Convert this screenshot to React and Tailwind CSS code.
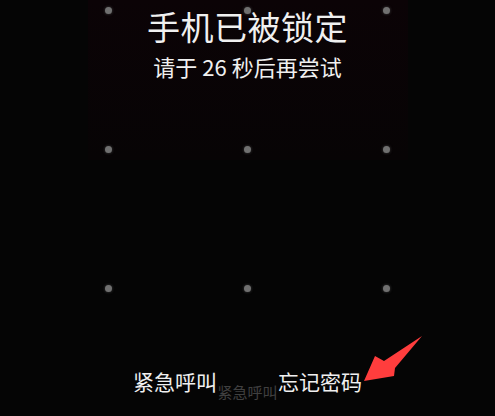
import React from "react";

const dots = [0, 1, 2, 3, 4, 5, 6, 7, 8];

const Arrow = () => (
  <svg
    className="absolute left-0 top-0 pointer-events-none"
    width="495"
    height="416"
    viewBox="0 0 495 416"
  >
    <polygon
      points="364,381 375,356 384,361 422,336 395,368 394,376"
      fill="#ff3d3d"
    />
  </svg>
);

const App = () => {
  return (
    <div
      className="relative w-[495px] h-[416px] overflow-hidden bg-[#050505] flex flex-col"
      style={{ fontFamily: '"Noto Sans CJK SC", "Noto Sans", sans-serif' }}
    >
      {/* faint screen card behind the title */}
      <div className="mx-auto w-[320px] h-[160px] bg-gradient-to-b from-[#0b0306] to-[#070405] flex flex-col items-center text-[#f0f0f0]">
        <h1 className="pt-[8px] text-[33px] leading-[36px] font-normal tracking-[0.5px]">
          手机已被锁定
        </h1>
        <p className="mt-[9px] text-[22px] leading-[26px]">请于 26 秒后再尝试</p>
      </div>

      {/* pattern lock dots */}
      <div className="absolute left-[105px] top-[7px] grid grid-cols-3 gap-x-[132px] gap-y-[132px]">
        {dots.map((d) => (
          <div
            key={d}
            className="w-[7px] h-[7px] rounded-full bg-[#707070] shadow-[0_0_3px_#444]"
          />
        ))}
      </div>

      <div className="mt-auto mb-[16px] flex justify-center items-start text-[#f0f0f0]">
        <span className="text-[21px] leading-[24px]">紧急呼叫</span>
        <span className="mt-[15px] text-[15px] leading-[16px] text-[#404040] w-[61px] text-center">
          紧急呼叫
        </span>
        <span className="text-[21px] leading-[24px]">忘记密码</span>
      </div>

      <Arrow />
    </div>
  );
};

export default App;
